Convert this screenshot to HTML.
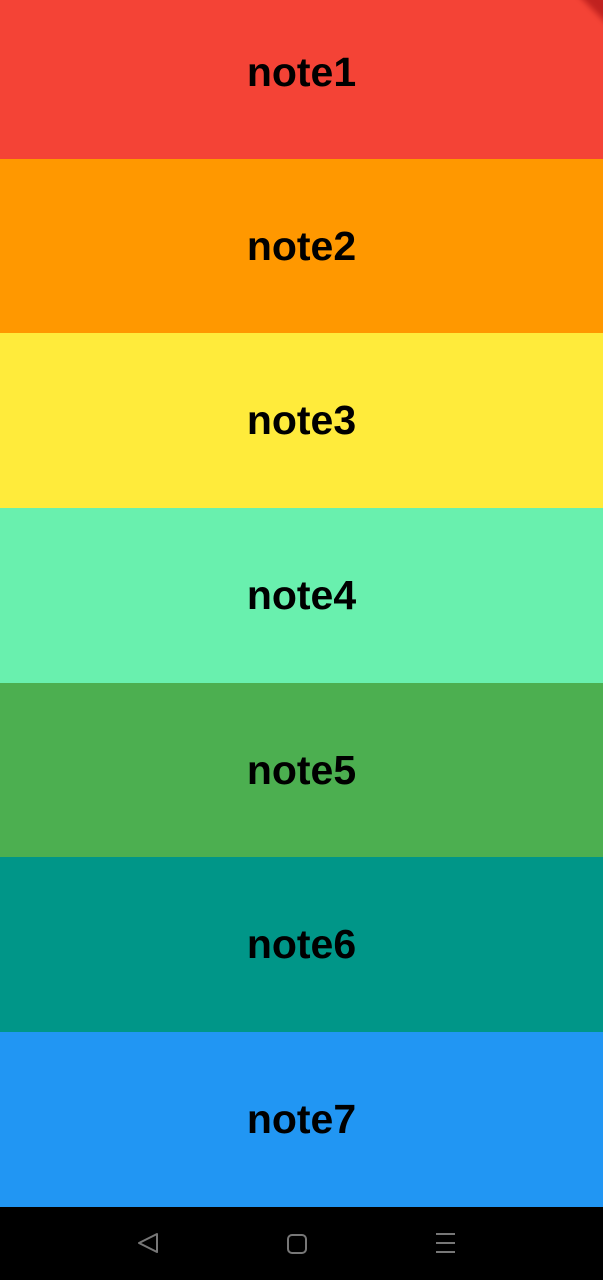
<!DOCTYPE html>
<html><head><style>
html,body{margin:0;padding:0;width:603px;height:1280px;overflow:hidden;background:#000}
.b{position:absolute;left:0;width:603px;height:175px;display:flex;align-items:center;justify-content:center;font-family:"Liberation Sans",sans-serif;font-weight:bold;font-size:41px;color:#000;padding-top:0;box-sizing:border-box}
.nav{position:absolute;left:0;top:1207px;width:603px;height:73px;background:#000}
</style></head><body>
<div class="b" style="top:-15px;height:174px;background:#f44336">note1</div>
<div class="b" style="top:159px;height:174px;background:#ff9800">note2</div>
<div class="b" style="top:333px;background:#ffeb3b">note3</div>
<div class="b" style="top:508px;background:#69f0ae">note4</div>
<div class="b" style="top:683px;height:174px;background:#4caf50">note5</div>
<div class="b" style="top:857px;background:#009688">note6</div>
<div class="b" style="top:1032px;background:#2196f3">note7</div>
<div style="position:absolute;top:0;right:0;width:50px;height:50px;overflow:hidden"><div style="position:absolute;width:100px;height:18px;background:#b71c1c;opacity:.85;transform:rotate(45deg);left:4px;top:2px;filter:blur(3px)"></div></div>
<div class="nav">
<svg width="603" height="73" style="position:absolute;left:0;top:0">
<path d="M157 27 L139 36 L157 45 Z" fill="none" stroke="#777" stroke-width="2" stroke-linejoin="round"/>
<rect x="288" y="28" width="18" height="18" rx="4" fill="none" stroke="#777" stroke-width="2"/>
<path d="M436 27h19M436 36h19M436 45h19" stroke="#777" stroke-width="2"/>
</svg></div>
</body></html>
